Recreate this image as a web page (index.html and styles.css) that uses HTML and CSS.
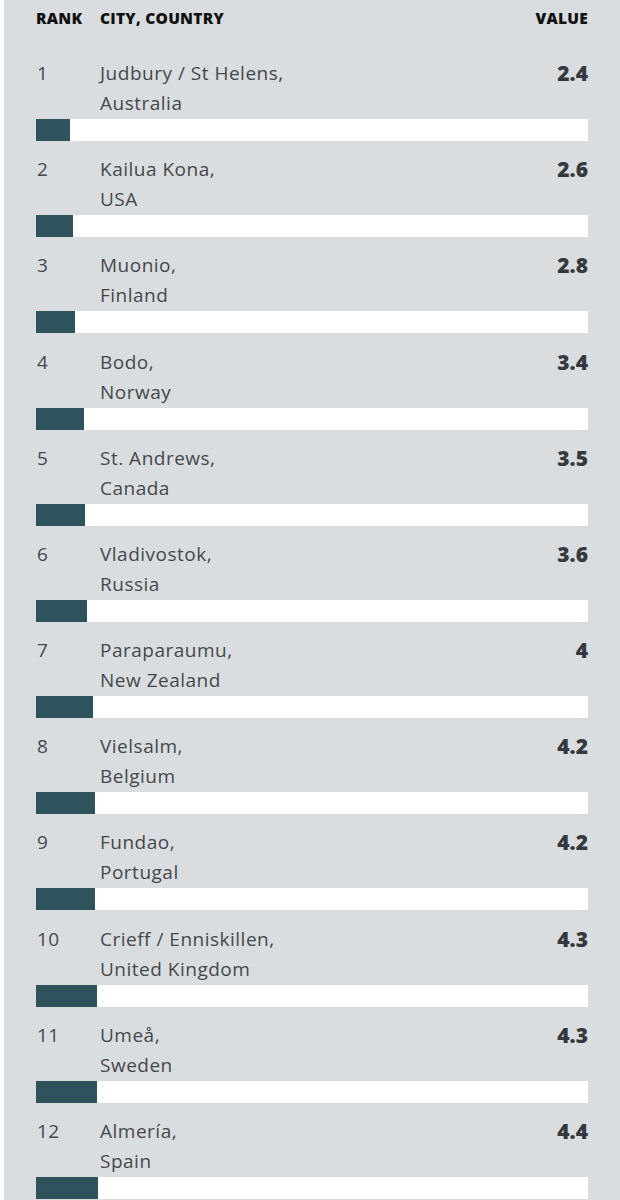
FILE: index.html
```html
<!DOCTYPE html>
<html>
<head>
<meta charset="utf-8">
<link rel="stylesheet" href="styles.css">
</head>
<body>
<div class="panel">
  <div class="head">
    <span class="h-rank">Rank</span>
    <span class="h-city">City, Country</span>
    <span class="h-val">Value</span>
  </div>
  <div class="row">
    <div class="line"><span class="c-rank">1</span><span class="c-city">Judbury / St Helens,<br>Australia</span><span class="c-val">2.4</span></div>
    <div class="bar"><div class="fill" style="width:6.13%"></div></div>
  </div>
  <div class="row">
    <div class="line"><span class="c-rank">2</span><span class="c-city">Kailua Kona,<br>USA</span><span class="c-val">2.6</span></div>
    <div class="bar"><div class="fill" style="width:6.64%"></div></div>
  </div>
  <div class="row">
    <div class="line"><span class="c-rank">3</span><span class="c-city">Muonio,<br>Finland</span><span class="c-val">2.8</span></div>
    <div class="bar"><div class="fill" style="width:7.15%"></div></div>
  </div>
  <div class="row">
    <div class="line"><span class="c-rank">4</span><span class="c-city">Bodo,<br>Norway</span><span class="c-val">3.4</span></div>
    <div class="bar"><div class="fill" style="width:8.68%"></div></div>
  </div>
  <div class="row">
    <div class="line"><span class="c-rank">5</span><span class="c-city">St. Andrews,<br>Canada</span><span class="c-val">3.5</span></div>
    <div class="bar"><div class="fill" style="width:8.94%"></div></div>
  </div>
  <div class="row">
    <div class="line"><span class="c-rank">6</span><span class="c-city">Vladivostok,<br>Russia</span><span class="c-val">3.6</span></div>
    <div class="bar"><div class="fill" style="width:9.2%"></div></div>
  </div>
  <div class="row">
    <div class="line"><span class="c-rank">7</span><span class="c-city">Paraparaumu,<br>New Zealand</span><span class="c-val">4</span></div>
    <div class="bar"><div class="fill" style="width:10.3%"></div></div>
  </div>
  <div class="row">
    <div class="line"><span class="c-rank">8</span><span class="c-city">Vielsalm,<br>Belgium</span><span class="c-val">4.2</span></div>
    <div class="bar"><div class="fill" style="width:10.73%"></div></div>
  </div>
  <div class="row">
    <div class="line"><span class="c-rank">9</span><span class="c-city">Fundao,<br>Portugal</span><span class="c-val">4.2</span></div>
    <div class="bar"><div class="fill" style="width:10.73%"></div></div>
  </div>
  <div class="row">
    <div class="line"><span class="c-rank">10</span><span class="c-city">Crieff / Enniskillen,<br>United Kingdom</span><span class="c-val">4.3</span></div>
    <div class="bar"><div class="fill" style="width:10.98%"></div></div>
  </div>
  <div class="row">
    <div class="line"><span class="c-rank">11</span><span class="c-city">Umeå,<br>Sweden</span><span class="c-val">4.3</span></div>
    <div class="bar"><div class="fill" style="width:10.98%"></div></div>
  </div>
  <div class="row">
    <div class="line"><span class="c-rank">12</span><span class="c-city">Almería,<br>Spain</span><span class="c-val">4.4</span></div>
    <div class="bar"><div class="fill" style="width:11.24%"></div></div>
  </div>
</div>
</body>
</html>
```
FILE: styles.css
```css
html, body {
  margin: 0;
  padding: 0;
  background: #ffffff;
}
body {
  font-family: "Open Sans", "Lato", sans-serif;
  color: #45484b;
}
.panel {
  margin-left: 4px;
  background: #dadde0;
  padding: 8px 32px 40px 32px;
  min-height: 1200px;
  box-sizing: border-box;
  display: flex;
  flex-direction: column;
  gap: 13.2px;
}
.head {
  display: grid;
  grid-template-columns: 64px 1fr auto;
  font-size: 15.5px;
  letter-spacing: 0.25px;
  font-weight: 800;
  text-transform: uppercase;
  line-height: 20px;
  color: #111111;
  margin-bottom: 16.8px;
}
.h-val { text-align: right; }
.line {
  display: grid;
  grid-template-columns: 64px 1fr auto;
  font-size: 19px;
  letter-spacing: 0.5px;
  line-height: 30px;
}
.c-rank { padding-left: 1px; }
.c-val {
  text-align: right;
  font-weight: 800;
  font-size: 21px;
  letter-spacing: 0;
  color: #35383c;
}
.bar {
  margin-top: 1px;
  height: 22px;
  background: #ffffff;
}
.fill {
  height: 100%;
  background: #2f535d;
}
```
